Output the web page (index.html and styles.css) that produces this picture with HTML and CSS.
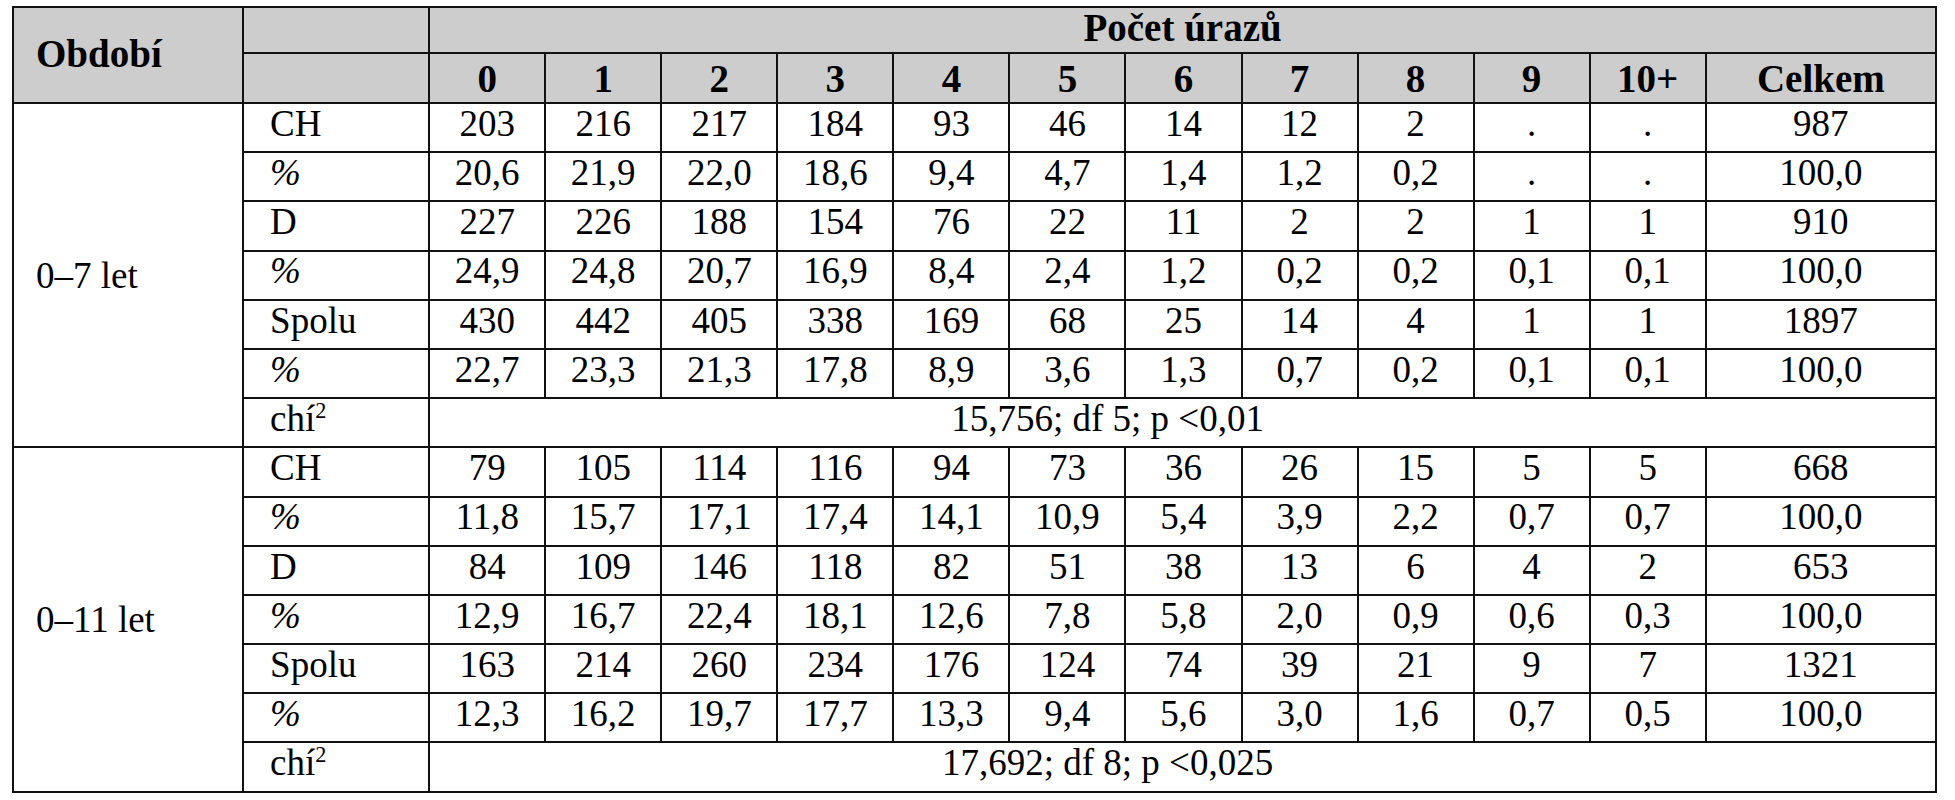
FILE: index.html
```html
<!DOCTYPE html>
<html lang="cs">
<head>
<meta charset="utf-8">
<title>Počet úrazů</title>
<link rel="stylesheet" href="styles.css">
</head>
<body>
<div class="page">
<table class="tbl">
  <colgroup>
    <col class="c-period"><col class="c-label">
    <col class="c-num"><col class="c-num"><col class="c-num"><col class="c-num"><col class="c-num"><col class="c-num">
    <col class="c-num"><col class="c-num"><col class="c-num"><col class="c-num"><col class="c-num">
    <col class="c-total">
  </colgroup>
  <thead>
    <tr class="h1">
      <th rowspan="2" class="period-h">Období</th>
      <th class="blank"></th>
      <th colspan="12" class="group-h">Počet úrazů</th>
    </tr>
    <tr class="h2">
      <th class="blank"></th>
      <th>0</th><th>1</th><th>2</th><th>3</th><th>4</th><th>5</th><th>6</th><th>7</th><th>8</th><th>9</th><th>10+</th><th>Celkem</th>
    </tr>
  </thead>
  <tbody class="grp">
    <tr><td rowspan="7" class="period">0–7 let</td><td class="lbl">CH</td><td>203</td><td>216</td><td>217</td><td>184</td><td>93</td><td>46</td><td>14</td><td>12</td><td>2</td><td>.</td><td>.</td><td>987</td></tr>
    <tr><td class="lbl pct">%</td><td>20,6</td><td>21,9</td><td>22,0</td><td>18,6</td><td>9,4</td><td>4,7</td><td>1,4</td><td>1,2</td><td>0,2</td><td>.</td><td>.</td><td>100,0</td></tr>
    <tr><td class="lbl">D</td><td>227</td><td>226</td><td>188</td><td>154</td><td>76</td><td>22</td><td>11</td><td>2</td><td>2</td><td>1</td><td>1</td><td>910</td></tr>
    <tr><td class="lbl pct">%</td><td>24,9</td><td>24,8</td><td>20,7</td><td>16,9</td><td>8,4</td><td>2,4</td><td>1,2</td><td>0,2</td><td>0,2</td><td>0,1</td><td>0,1</td><td>100,0</td></tr>
    <tr><td class="lbl">Spolu</td><td>430</td><td>442</td><td>405</td><td>338</td><td>169</td><td>68</td><td>25</td><td>14</td><td>4</td><td>1</td><td>1</td><td>1897</td></tr>
    <tr><td class="lbl pct">%</td><td>22,7</td><td>23,3</td><td>21,3</td><td>17,8</td><td>8,9</td><td>3,6</td><td>1,3</td><td>0,7</td><td>0,2</td><td>0,1</td><td>0,1</td><td>100,0</td></tr>
    <tr><td class="lbl">chí<sup>2</sup></td><td colspan="12" class="stat">15,756; df 5; p &lt;0,01</td></tr>
  </tbody>
  <tbody class="grp">
    <tr><td rowspan="7" class="period">0–11 let</td><td class="lbl">CH</td><td>79</td><td>105</td><td>114</td><td>116</td><td>94</td><td>73</td><td>36</td><td>26</td><td>15</td><td>5</td><td>5</td><td>668</td></tr>
    <tr><td class="lbl pct">%</td><td>11,8</td><td>15,7</td><td>17,1</td><td>17,4</td><td>14,1</td><td>10,9</td><td>5,4</td><td>3,9</td><td>2,2</td><td>0,7</td><td>0,7</td><td>100,0</td></tr>
    <tr><td class="lbl">D</td><td>84</td><td>109</td><td>146</td><td>118</td><td>82</td><td>51</td><td>38</td><td>13</td><td>6</td><td>4</td><td>2</td><td>653</td></tr>
    <tr><td class="lbl pct">%</td><td>12,9</td><td>16,7</td><td>22,4</td><td>18,1</td><td>12,6</td><td>7,8</td><td>5,8</td><td>2,0</td><td>0,9</td><td>0,6</td><td>0,3</td><td>100,0</td></tr>
    <tr><td class="lbl">Spolu</td><td>163</td><td>214</td><td>260</td><td>234</td><td>176</td><td>124</td><td>74</td><td>39</td><td>21</td><td>9</td><td>7</td><td>1321</td></tr>
    <tr><td class="lbl pct">%</td><td>12,3</td><td>16,2</td><td>19,7</td><td>17,7</td><td>13,3</td><td>9,4</td><td>5,6</td><td>3,0</td><td>1,6</td><td>0,7</td><td>0,5</td><td>100,0</td></tr>
    <tr><td class="lbl">chí<sup>2</sup></td><td colspan="12" class="stat">17,692; df 8; p &lt;0,025</td></tr>
  </tbody>
</table>
</div>
</body>
</html>
```

FILE: styles.css
```css
html, body {
  margin: 0;
  padding: 0;
  background: #ffffff;
}

.page {
  padding: 6px 0 0 12px;
}

.tbl {
  border-collapse: collapse;
  table-layout: fixed;
  width: 1925px;
  font-family: "Liberation Serif", "DejaVu Serif", serif;
  font-size: 37px;
  color: #000;
  border: 2px solid #000;
}

.c-period { width: 230px; }
.c-label { width: 186px; }
.c-num { width: 116px; }
.c-total { width: 230px; }

.tbl th,
.tbl td {
  border: 2px solid #111;
  padding: 0 0 8px;
  text-align: center;
  vertical-align: middle;
  line-height: 0.85;
  white-space: nowrap;
}

.tbl thead th {
  background: #cdcdcd;
  font-weight: bold;
  font-size: 39px;
  line-height: 1;
  padding: 0;
}

.tbl .h1 { height: 46px; }
.tbl .h2 { height: 50px; }
.tbl tbody tr { height: 49.2px; }

.tbl .group-h {
  padding-bottom: 5px;
}

.tbl .period-h {
  text-align: left;
  padding-left: 22px;
  padding-bottom: 4px;
}

.tbl .period {
  text-align: left;
  padding-left: 22px;
  padding-bottom: 0;
  line-height: 1;
}

.tbl .lbl {
  text-align: left;
  padding-left: 26px;
}

.tbl .pct {
  font-style: italic;
}

.tbl .stat {
  padding-right: 150px;
}

.tbl sup {
  font-size: 0.6em;
  line-height: 0;
  vertical-align: 0.6em;
}
```
